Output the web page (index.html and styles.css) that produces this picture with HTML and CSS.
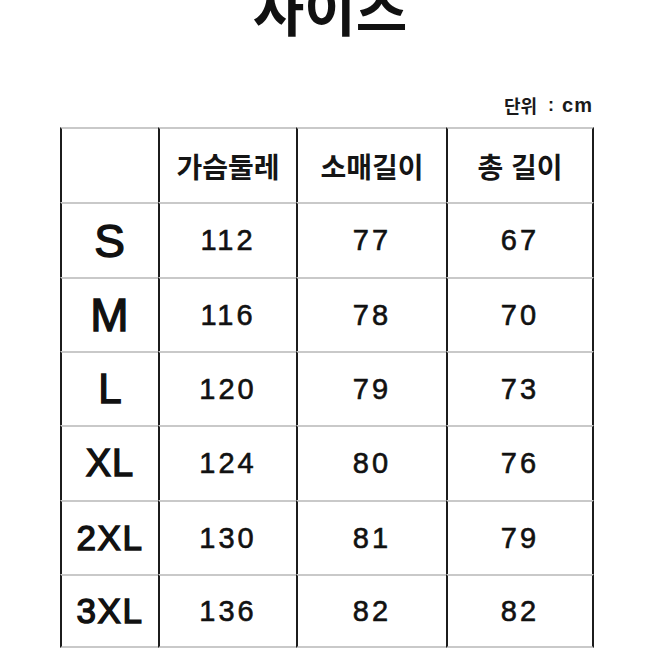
FILE: index.html
```html
<!DOCTYPE html>
<html lang="ko">
<head>
<meta charset="utf-8">
<link rel="stylesheet" href="styles.css">
</head>
<body>
<div class="page">
  <h1 class="title">사이즈</h1>
  <div class="unit"><span class="unit-ko">단위</span><span class="unit-colon">:</span><span class="unit-cm">cm</span></div>
  <div class="chart">
    <div class="cell head"></div>
    <div class="cell head">가슴둘레</div>
    <div class="cell head">소매길이</div>
    <div class="cell head last">총 길이</div>

    <div class="cell size s1">S</div>
    <div class="cell num">112</div>
    <div class="cell num">77</div>
    <div class="cell num last">67</div>

    <div class="cell size s1">M</div>
    <div class="cell num">116</div>
    <div class="cell num">78</div>
    <div class="cell num last">70</div>

    <div class="cell size s2">L</div>
    <div class="cell num">120</div>
    <div class="cell num">79</div>
    <div class="cell num last">73</div>

    <div class="cell size s3">XL</div>
    <div class="cell num">124</div>
    <div class="cell num">80</div>
    <div class="cell num last">76</div>

    <div class="cell size s4">2XL</div>
    <div class="cell num">130</div>
    <div class="cell num">81</div>
    <div class="cell num last">79</div>

    <div class="cell size s4 bottom">3XL</div>
    <div class="cell num bottom">136</div>
    <div class="cell num bottom">82</div>
    <div class="cell num last bottom">82</div>
  </div>
</div>
</body>
</html>
```

FILE: styles.css
```css
html, body {
  margin: 0;
  padding: 0;
  background: #ffffff;
}

.page {
  width: 660px;
  height: 660px;
  overflow: hidden;
  color: #111111;
  font-family: "Noto Sans CJK KR", "Liberation Sans", sans-serif;
}

.title {
  margin: -21px 0 0 0;
  height: 56px;
  font-size: 56px;
  line-height: 1;
  font-weight: 700;
  text-align: center;
}

.unit {
  width: 593px;
  margin-top: 60px;
  height: 20px;
  display: flex;
  justify-content: flex-end;
  align-items: center;
  color: #1a1a1a;
}

.unit-ko {
  font-family: "Noto Sans CJK KR", sans-serif;
  font-size: 18px;
  font-weight: 700;
  line-height: 20px;
}

.unit-colon {
  font-family: "Liberation Sans", sans-serif;
  font-size: 18px;
  font-weight: 700;
  line-height: 20px;
  margin: 0 8px 0 11px;
}

.unit-cm {
  font-family: "Liberation Sans", sans-serif;
  font-size: 20px;
  font-weight: 700;
  line-height: 20px;
  letter-spacing: 1px;
}

.chart {
  margin: 12px 0 0 60px;
  display: grid;
  grid-template-columns: 98px 138px 150px 148px;
  grid-template-rows: 75px 75px 74px 74px 75px 74px 74px;
  width: 534px;
}

.cell {
  box-sizing: border-box;
  border-left: 2px solid #1c1c1c;
  border-top: 2px solid #c9c9c9;
  display: flex;
  align-items: center;
  justify-content: center;
}

.cell.last {
  border-right: 2px solid #1c1c1c;
}

.cell.bottom {
  border-bottom: 2px solid #c9c9c9;
}

.head {
  font-family: "Noto Sans CJK KR", sans-serif;
  font-size: 28px;
  font-weight: 700;
  color: #151515;
}

.size {
  font-family: "Liberation Sans", Arial, sans-serif;
  font-weight: 400;
  -webkit-text-stroke: 1.4px #111111;
  color: #111111;
}

.s1 { font-size: 46px; letter-spacing: 1px; }
.s2 { font-size: 42px; }
.s3 { font-size: 38px; letter-spacing: 1px; }
.s4 { font-size: 35px; letter-spacing: 1.5px; }

.num {
  font-family: "Liberation Sans", Arial, sans-serif;
  font-size: 29px;
  font-weight: 400;
  letter-spacing: 3px;
  -webkit-text-stroke: 0.6px #111111;
  color: #111111;
}
```
